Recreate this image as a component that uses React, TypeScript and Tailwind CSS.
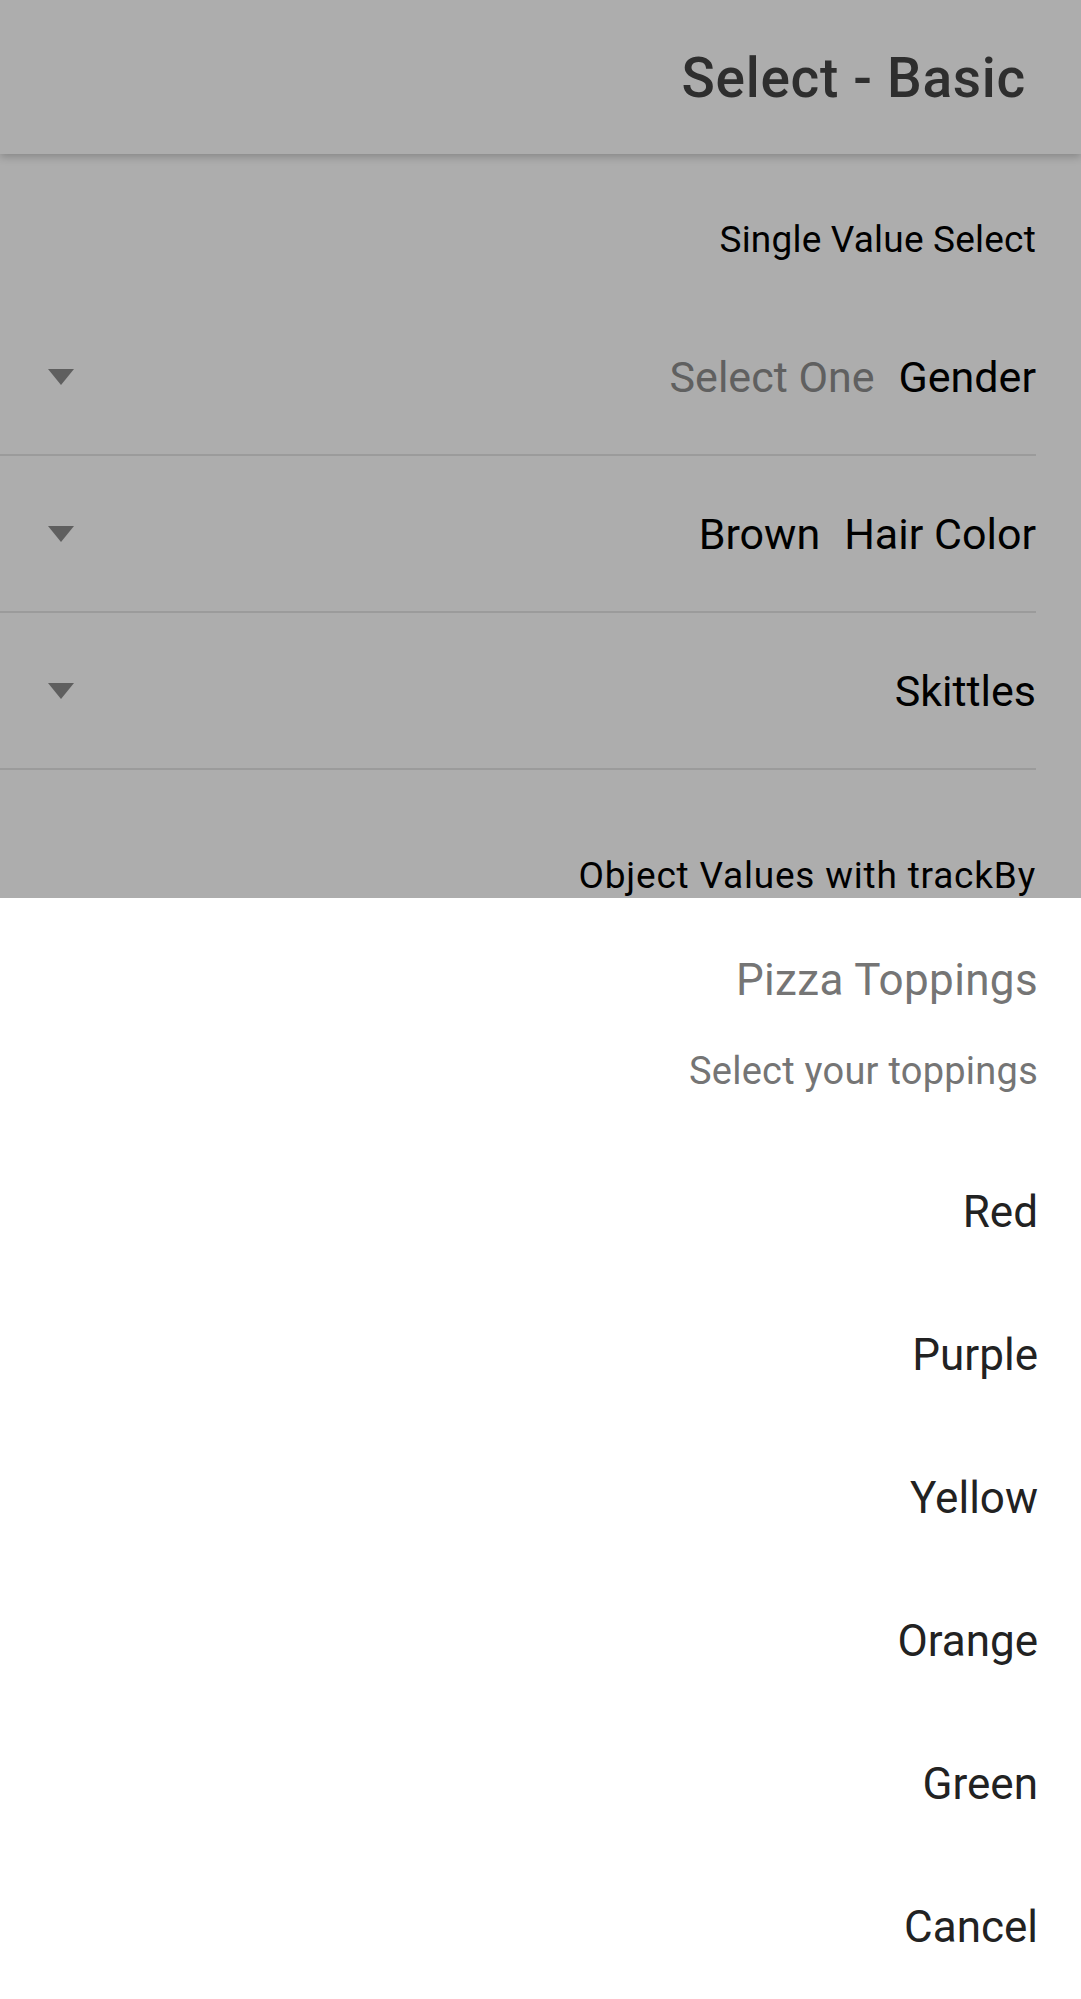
const rows = [
  { value: "Select One", placeholder: true, label: "Gender" },
  { value: "Brown", placeholder: false, label: "Hair Color" },
  { value: "", placeholder: false, label: "Skittles" },
];

const toppings = ["Red", "Purple", "Yellow", "Orange", "Green", "Cancel"];

const Caret = () => (
  <svg width="26" height="16" viewBox="0 0 26 16" className="shrink-0">
    <path d="M0 0 L26 0 L13 16 Z" fill="#5f5f5f" />
  </svg>
);

const SelectRow = ({ value, placeholder, label }: (typeof rows)[number]) => (
  <div className="h-[157px] mr-[45px] border-b-2 border-[#9b9b9b] flex items-center pl-[48px]">
    <Caret />
    <div className="flex-1" />
    {value ? (
      <span className={`text-[43px] leading-[44px] mr-[24px] ${placeholder ? "text-[#606060]" : "text-black"}`}>
        {value}
      </span>
    ) : null}
    <span className="text-[43px] leading-[44px] text-black">{label}</span>
  </div>
);

export default function App() {
  return (
    <div
      className="w-[1081px] h-[1999px] flex flex-col overflow-hidden bg-white"
      style={{ fontFamily: "Roboto, 'Noto Sans', sans-serif" }}
    >
      {/* dimmed page behind the action sheet */}
      <div className="h-[898px] shrink-0 overflow-hidden bg-[#adadad] flex flex-col">
        <header className="relative z-10 h-[154px] shrink-0 bg-[#adadad] shadow-[0_3px_8px_rgba(0,0,0,0.22)] flex justify-end pt-[51px] pr-[55px]">
          <h1 className="text-[55px] leading-[55px] font-medium tracking-[0.7px] text-[#2e2e2e]">Select - Basic</h1>
        </header>

        <div className="flex justify-end pt-[67px] pr-[45px] pb-[41px]">
          <span className="text-[37px] leading-[37px] tracking-[0.2px] text-black">Single Value Select</span>
        </div>

        {rows.map((row) => (
          <SelectRow key={row.label} {...row} />
        ))}

        <div className="flex justify-end pt-[87px] pr-[45px]">
          <span className="text-[37px] leading-[37px] tracking-[0.8px] text-black">Object Values with trackBy</span>
        </div>
      </div>

      {/* action sheet */}
      <div className="flex-1 bg-white flex flex-col">
        <div className="flex flex-col items-end pr-[43px] pt-[60px] pb-[50px]">
          <span className="text-[44px] leading-[44px] tracking-[0.35px] text-[#757575]">Pizza Toppings</span>
          <span className="mt-[50px] text-[38px] leading-[38px] tracking-[0.25px] text-[#757575]">Select your toppings</span>
        </div>
        {toppings.map((t) => (
          <button
            key={t}
            className="h-[143px] shrink-0 flex items-center justify-end pr-[43px] text-[44px] leading-[44px] text-[#222222]"
          >
            {t}
          </button>
        ))}
      </div>
    </div>
  );
}
